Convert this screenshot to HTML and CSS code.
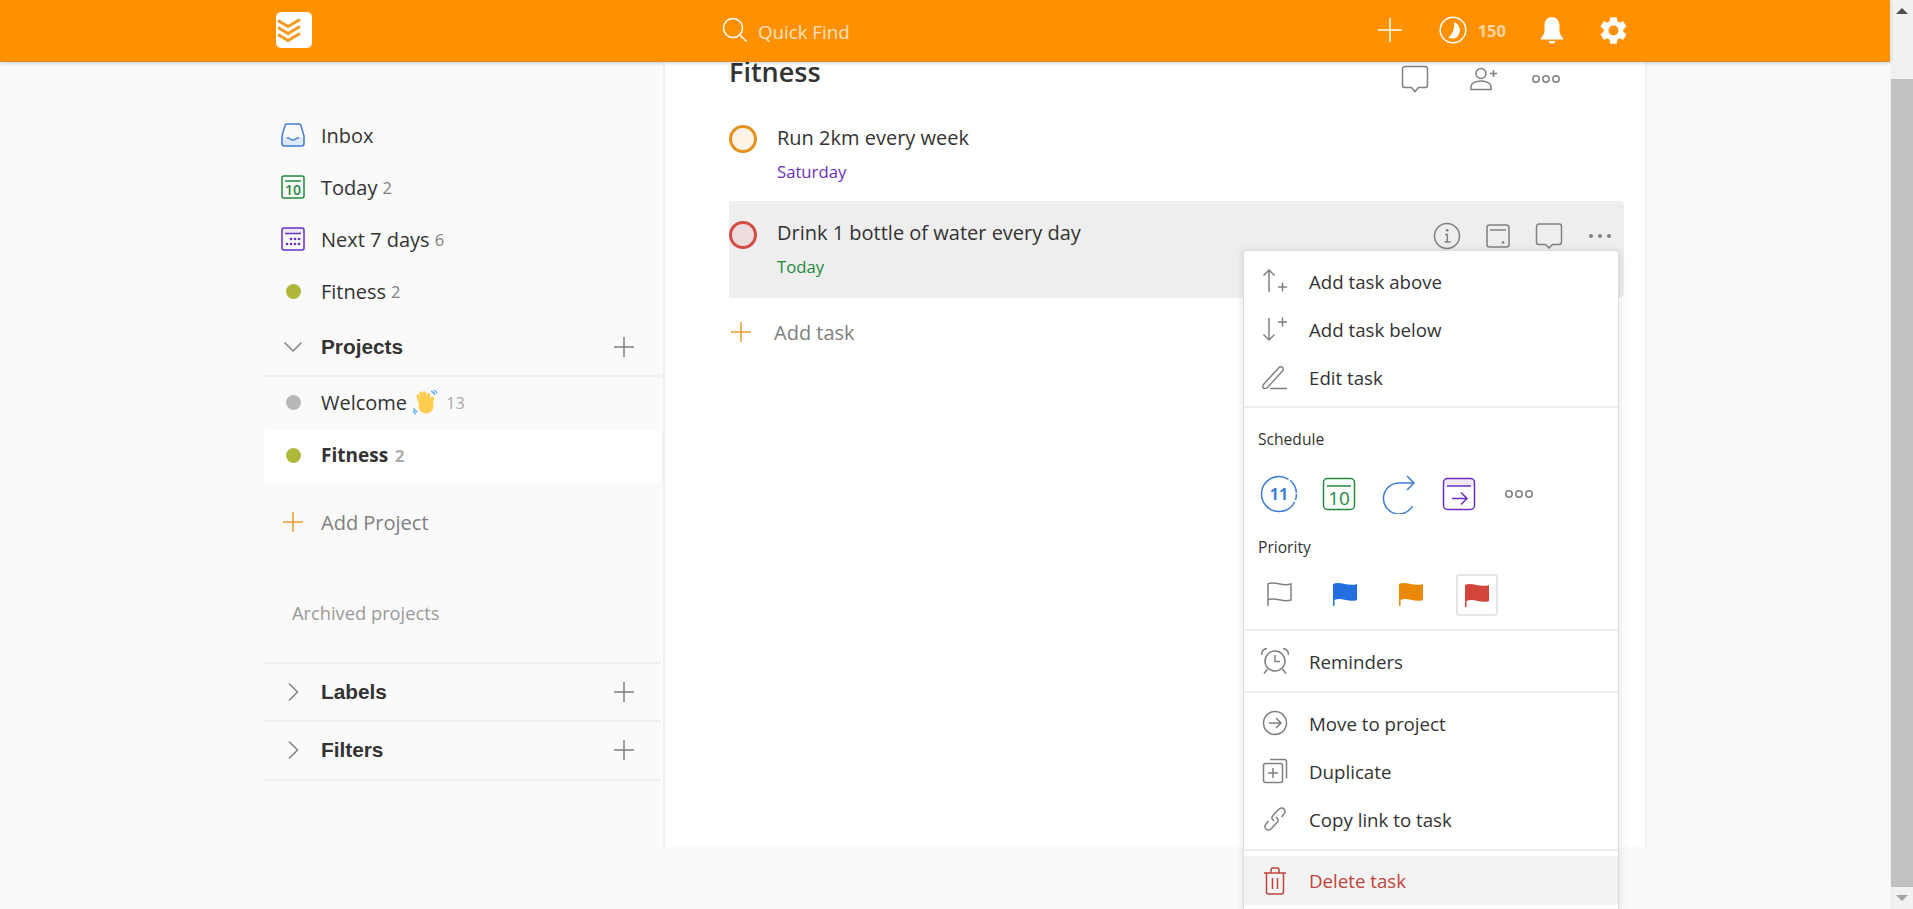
FILE: index.html
```html
<!DOCTYPE html>
<html lang="en">
<head>
  <meta charset="UTF-8">
  <meta name="viewport" content="width=device-width, initial-scale=1.0">
  <title>Fitness: Todoist</title>
  <link rel="stylesheet" href="styles.css">
</head>
<body>
  <div id="page">
    <div id="window">
      <header class="topbar">
        <div class="logo">
          <svg class="ico logo-stripes" width="24" height="26" viewBox="0 0 24 26"><path d="M1 6l10 6 12-7M1 13l10 6 12-7M1 20l10 6 12-7" transform="translate(0 -2.500)"/></svg>
        </div>
        <div class="search">
          <svg class="ico" width="26" height="26" viewBox="0 0 26 26"><circle cx="11" cy="11" r="9.500"/><path d="M18 18l6.500 6.500"/></svg>
          <span class="search-text">Quick Find</span>
        </div>
        <div class="topbar-actions">
          <svg class="ico" width="26" height="26" viewBox="0 0 26 26"><path d="M13 1v24M1 13h24"/></svg>
          <svg class="ico karma" width="28" height="28" viewBox="0 0 28 28"><circle cx="14" cy="14" r="12.800"/><path class="solid" d="M15 6c6 2 8 10 3 15-2.500 2-6 2-9 .5 4-2 7-9 6-15.500z"/></svg>
          <span class="karma-count">150</span>
          <svg class="solid bell" width="26" height="28" viewBox="0 0 26 28"><path d="M13 1c5 0 7.500 4 7.500 9v5c0 3 2 5 3.500 7 .5 1 0 1.500-1 1.500H3c-1 0-1.500-.5-1-1.500 1.500-2 3.500-4 3.500-7v-5C5.500 5 8 1 13 1zM9.500 25h7c-.5 2-2 2.500-3.500 2.500S10 27 9.500 25z"/></svg>
          <svg class="solid gear" width="33" height="33" viewBox="0 0 24 24"><path d="M19.14 12.94c.04-.3.06-.61.06-.94 0-.32-.02-.64-.07-.94l2.03-1.58c.18-.14.23-.41.12-.61l-1.92-3.32c-.12-.22-.37-.29-.59-.22l-2.39.96c-.5-.38-1.03-.7-1.62-.94l-.36-2.54c-.04-.24-.24-.41-.48-.41h-3.84c-.24 0-.43.17-.47.41l-.36 2.54c-.59.24-1.13.57-1.62.94l-2.39-.96c-.22-.08-.47 0-.59.22L2.74 8.87c-.12.21-.08.47.12.61l2.03 1.58c-.05.3-.09.63-.09.94s.02.64.07.94l-2.03 1.58c-.18.14-.23.41-.12.61l1.92 3.32c.12.22.37.29.59.22l2.39-.96c.5.38 1.03.7 1.62.94l.36 2.54c.05.24.24.41.48.41h3.84c.24 0 .44-.17.47-.41l.36-2.54c.59-.24 1.13-.56 1.62-.94l2.39.96c.22.08.47 0 .59-.22l1.92-3.32c.12-.22.07-.47-.12-.61l-2.01-1.58zM12 15.600c-1.980 0-3.600-1.620-3.600-3.600s1.620-3.600 3.600-3.600 3.600 1.620 3.600 3.600-1.620 3.600-3.600 3.600z"/></svg>
        </div>
      </header>

      <div class="content">
        <aside class="sidebar">
          <ul class="nav">
            <li class="nav-row">
              <span class="nav-icon"><svg class="ico blue" width="26" height="26" viewBox="0 0 26 26"><path class="tint-blue" d="M2 15h6c1 0 1.500 2.500 5 2.500s4-2.500 5-2.500h6v6.500a2.500 2.500 0 0 1-2.500 2.500h-17A2.500 2.500 0 0 1 2 21.500z"/><path d="M7 2h12a2 2 0 0 1 2 1.500l3 10.500v7.500a2.500 2.500 0 0 1-2.500 2.500h-17A2.500 2.500 0 0 1 2 21.500V14L5 3.500A2 2 0 0 1 7 2z"/><path d="M7 16h1.500c1 0 1.500 2 4.500 2s3.500-2 4.500-2H19" class="inbox-wave"/></svg></span>
              <span>Inbox</span>
            </li>
            <li class="nav-row">
              <span class="nav-icon"><svg class="ico green" width="26" height="26" viewBox="0 0 26 26"><rect x="2" y="2" width="22" height="22" rx="2"/><path d="M5 7h16"/><text x="13" y="21" class="cal-num">10</text></svg></span>
              <span>Today</span><span class="count">2</span>
            </li>
            <li class="nav-row">
              <span class="nav-icon"><svg class="ico purple" width="26" height="26" viewBox="0 0 26 26"><path class="tint-purple" d="M2 4a2 2 0 0 1 2-2h18a2 2 0 0 1 2 2v3H2z"/><rect x="2" y="2" width="22" height="22" rx="2"/><path d="M5 7.500h16"/><path class="dots" d="M11 13h.1M15 13h.1M19 13h.1M7 18h.1M11 18h.1M15 18h.1M19 18h.1"/></svg></span>
              <span>Next 7 days</span><span class="count">6</span>
            </li>
            <li class="nav-row">
              <span class="nav-icon"><span class="dot dot-olive"></span></span>
              <span>Fitness</span><span class="count">2</span>
            </li>
          </ul>

          <div class="section-head section-projects">
            <span class="nav-icon"><svg class="ico grey" width="20" height="12" viewBox="0 0 20 12"><path d="M1.500 1.500l8.500 8.500 8.500-8.500"/></svg></span>
            <span class="section-name">Projects</span>
            <svg class="ico grey section-add" width="20" height="20" viewBox="0 0 20 20"><path d="M10 0v20M0 10h20"/></svg>
          </div>

          <ul class="nav project-list">
            <li class="nav-row">
              <span class="nav-icon"><span class="dot dot-grey"></span></span>
              <span>Welcome</span>
              <svg class="wave" width="25" height="25" viewBox="0 0 25 25">
                <g class="wave-lines"><path d="M18 1.500c2 .2 3.500 1.500 4 3.500M20.500 0c1.500.5 3 1.500 3.500 3.500M1 18c.2 2 1.500 3.500 3.500 4M0 20.500c.5 1.500 1.500 3 3 3.500"/></g>
                <g class="wave-hand"><path d="M7 12l-2-6M10 11L8 3M13 10l-1.500-7M16 10l-.5-5.500M18.500 14l1-6"/></g>
                <circle class="wave-palm" cx="13" cy="16" r="7.500"/>
              </svg>
              <span class="count light">13</span>
            </li>
            <li class="nav-row active">
              <span class="nav-icon"><span class="dot dot-olive"></span></span>
              <span>Fitness</span><span class="count">2</span>
            </li>
          </ul>

          <div class="nav-row add-row add-project">
            <span class="nav-icon"><svg class="ico orange" width="20" height="20" viewBox="0 0 20 20"><path d="M10 0v20M0 10h20"/></svg></span>
            <span>Add Project</span>
          </div>

          <div class="archived">Archived projects</div>

          <div class="section-head section-labels">
            <span class="nav-icon"><svg class="ico grey" width="12" height="20" viewBox="0 0 12 20"><path d="M2 1.500l8.500 8.500-8.500 8.500"/></svg></span>
            <span class="section-name">Labels</span>
            <svg class="ico grey section-add" width="20" height="20" viewBox="0 0 20 20"><path d="M10 0v20M0 10h20"/></svg>
          </div>
          <div class="section-head">
            <span class="nav-icon"><svg class="ico grey" width="12" height="20" viewBox="0 0 12 20"><path d="M2 1.500l8.500 8.500-8.500 8.500"/></svg></span>
            <span class="section-name">Filters</span>
            <svg class="ico grey section-add" width="20" height="20" viewBox="0 0 20 20"><path d="M10 0v20M0 10h20"/></svg>
          </div>
        </aside>

        <main class="main">
          <div class="main-head">
            <h1>Fitness</h1>
            <div class="main-actions">
              <svg class="ico grey comment-head" width="28" height="28" viewBox="0 0 28 28"><path d="M4 1.500h20a2.500 2.500 0 0 1 2.500 2.500v16a2.500 2.500 0 0 1-2.500 2.500h-6.500L14 26.500l-3.500-4H4A2.500 2.500 0 0 1 1.500 20V4A2.500 2.500 0 0 1 4 1.500z"/></svg>
              <svg class="ico grey" width="28" height="24" viewBox="0 0 28 24"><circle cx="11" cy="6.500" r="5"/><path d="M1 22.500v-3c0-3 4-5.500 10-5.500s10 2.500 10 5.500v3zM20 6.500h7M23.500 3v7"/></svg>
              <svg class="ico grey" width="30" height="10" viewBox="0 0 30 10"><circle cx="5" cy="5" r="3.200"/><circle cx="15" cy="5" r="3.200"/><circle cx="25" cy="5" r="3.200"/></svg>
            </div>
          </div>

          <div class="task">
            <span class="check check-orange"></span>
            <div class="task-body">
              <div class="task-title">Run 2km every week</div>
              <div class="task-date date-purple">Saturday</div>
            </div>
          </div>

          <div class="task task-hover">
            <span class="check check-red"></span>
            <div class="task-body">
              <div class="task-title">Drink 1 bottle of water every day</div>
              <div class="task-date date-green">Today</div>
            </div>
            <div class="task-actions">
              <span><svg class="ico grey" width="28" height="28" viewBox="0 0 28 28"><circle cx="14" cy="14" r="12.500"/><path d="M12 12.500h2.300V20M11.500 20h6"/><path class="dots" d="M14.200 8.200h.1"/></svg></span>
              <span><svg class="ico grey" width="26" height="26" viewBox="0 0 26 26"><rect x="2" y="2" width="22" height="22" rx="2.500"/><path d="M5 7h16"/><path class="dots" d="M18 19.500h.1"/></svg></span>
              <span><svg class="ico grey" width="28" height="28" viewBox="0 0 28 28"><path d="M4 2h20a2.500 2.500 0 0 1 2.500 2.500V20a2.500 2.500 0 0 1-2.500 2.500h-6.500L14 26l-3.500-3.500H4A2.500 2.500 0 0 1 1.500 20V4.500A2.500 2.500 0 0 1 4 2z"/></svg></span>
              <span><svg class="solid-grey" width="24" height="6" viewBox="0 0 24 6"><circle cx="3" cy="3" r="2"/><circle cx="12" cy="3" r="2"/><circle cx="21" cy="3" r="2"/></svg></span>
            </div>
          </div>

          <div class="add-row add-task">
            <svg class="ico orange" width="20" height="20" viewBox="0 0 20 20"><path d="M10 0v20M0 10h20"/></svg>
            <span>Add task</span>
          </div>
        </main>

        <div class="menu">
          <div class="menu-group menu-group-first">
            <div class="menu-item">
              <svg class="ico grey" width="26" height="26" viewBox="0 0 26 26"><path d="M7 24V2M1.500 7.500L7 2l5.500 5.500M16 19h9M20.500 14.500v9"/></svg>
              <span>Add task above</span>
            </div>
            <div class="menu-item">
              <svg class="ico grey" width="26" height="26" viewBox="0 0 26 26"><path d="M7 2v22M1.500 18.500L7 24l5.500-5.500M16 6h9M20.500 1.500v9"/></svg>
              <span>Add task below</span>
            </div>
            <div class="menu-item">
              <svg class="ico grey" width="26" height="26" viewBox="0 0 26 26"><path d="M1.500 20.500L17 3.500c1-1 2.500-1 3.500 0s1 2.500 0 3.500L5.500 23.500c-1 1-4 1.500-4.500.5s0-2.500.5-3.500zM8 24.500h17"/></svg>
              <span>Edit task</span>
            </div>
          </div>

          <div class="menu-group menu-pickers">
            <div class="menu-label">Schedule</div>
            <div class="picker-row">
              <span><svg class="ico blue" width="38" height="38" viewBox="0 0 38 38"><circle cx="19" cy="19" r="17.500" stroke-dasharray="6 2 84 2 14 2"/><text x="19" y="25" class="day-num">11</text></svg></span>
              <span><svg class="ico green" width="34" height="34" viewBox="0 0 34 34"><rect x="1.500" y="1.500" width="31" height="31" rx="4"/><path d="M5 9h24"/><text x="17" y="28" class="cal-num big">10</text></svg></span>
              <span><svg class="ico blue" width="34" height="40" viewBox="0 0 34 40"><path d="M31 9H17a15.500 15.500 0 1 0 13.500 23M25 2l7 7-7 7"/></svg></span>
              <span><svg class="ico purple" width="34" height="34" viewBox="0 0 34 34"><path class="tint-purple" d="M2 5a3 3 0 0 1 3-3h24a3 3 0 0 1 3 3v4H2z"/><rect x="1.500" y="1.500" width="31" height="31" rx="4"/><path d="M5 9h24M10 21.500h15M19 15.500l6 6-6 6"/></svg></span>
              <span><svg class="ico grey" width="30" height="10" viewBox="0 0 30 10"><circle cx="5" cy="5" r="3.200"/><circle cx="15" cy="5" r="3.200"/><circle cx="25" cy="5" r="3.200"/></svg></span>
            </div>
            <div class="menu-label priority-label">Priority</div>
            <div class="picker-row flags">
              <span><svg class="ico grey" width="26" height="26" viewBox="0 0 26 26"><path d="M2 25V3c7-3.500 14 3 23 0v16c-8 3-16-3.500-23 0"/></svg></span>
              <span><svg class="flag flag-blue" width="26" height="26" viewBox="0 0 26 26"><path d="M1 25V3c7-3.500 15 3 24 0v16c-8 3-16-3.500-22.500 0V25z"/></svg></span>
              <span><svg class="flag flag-orange" width="26" height="26" viewBox="0 0 26 26"><path d="M1 25V3c7-3.500 15 3 24 0v16c-8 3-16-3.500-22.500 0V25z"/></svg></span>
              <span class="flag-current"><svg class="flag flag-red" width="26" height="26" viewBox="0 0 26 26"><path d="M1 25V3c7-3.500 15 3 24 0v16c-8 3-16-3.500-22.500 0V25z"/></svg></span>
            </div>
          </div>

          <div class="menu-group">
            <div class="menu-item">
              <svg class="ico grey alarm" width="30" height="28" viewBox="0 0 30 28"><circle cx="15" cy="14" r="10"/><path d="M15 8v6.500h5M2 8c-1-3 1-6 5-6.500M28 8c1-3-1-6-5-6.500M7.500 22L4 26.500M22.500 22l3.500 4.500"/></svg>
              <span>Reminders</span>
            </div>
          </div>

          <div class="menu-group">
            <div class="menu-item">
              <svg class="ico grey" width="26" height="26" viewBox="0 0 26 26"><circle cx="13" cy="13" r="11.500"/><path d="M7 13h12M14 8l5 5-5 5"/></svg>
              <span>Move to project</span>
            </div>
            <div class="menu-item">
              <svg class="ico grey" width="26" height="26" viewBox="0 0 26 26"><rect x="1.500" y="5.500" width="19" height="19" rx="2"/><path d="M6 15h10M11 10v10M8 1.500h14.500a2 2 0 0 1 2 2v17"/></svg>
              <span>Duplicate</span>
            </div>
            <div class="menu-item">
              <svg class="ico grey" width="26" height="26" viewBox="0 0 26 26"><path d="M12 15l-1-1c-1.500-1.500-1.500-3 0-4.500l5.500-6c2-2 4-2 5.500-.5s1.500 3.500-.5 5.500l-2 2.500M14 11l1 1c1.500 1.500 1.500 3 0 4.500l-5.500 6c-2 2-4 2-5.500.5s-1.500-3.500.5-5.500l2-2.500"/></svg>
              <span>Copy link to task</span>
            </div>
          </div>

          <div class="menu-item menu-delete">
            <svg class="ico red" width="26" height="28" viewBox="0 0 26 28"><path d="M2 6h22M9 6V3a2 2 0 0 1 2-2h4a2 2 0 0 1 2 2v3M4.500 6v19a2 2 0 0 0 2 2h13a2 2 0 0 0 2-2V6M10.500 11v11M15.500 11v11"/></svg>
            <span>Delete task</span>
          </div>
        </div>
      </div>
    </div>

    <div class="scrollbar">
      <div class="scroll-btn"><span class="arrow-up"></span></div>
      <div class="scroll-thumb"></div>
      <div class="scroll-btn"><span class="arrow-down"></span></div>
    </div>
  </div>
</body>
</html>
```

FILE: styles.css
```css
* {
  box-sizing: border-box;
}

html, body {
  margin: 0;
  padding: 0;
  height: 909px;
  overflow: hidden;
}

body {
  font-family: 'Open Sans', 'Noto Sans', sans-serif;
  font-size: 20px;
  color: #333;
  background-color: #fafafa;
}

ul {
  list-style: none;
  margin: 0;
  padding: 0;
}

#page {
  display: flex;
  height: 909px;
}

#window {
  flex: 1;
  display: flex;
  flex-direction: column;
  min-width: 0;
}

/* icons */
.ico {
  fill: none;
  stroke: currentColor;
  stroke-width: 1.5;
  flex: none;
  display: block;
}

.ico text {
  stroke: none;
  fill: currentColor;
  text-anchor: middle;
}

.solid {
  fill: #fff;
  stroke: none;
}

.solid-grey {
  fill: #808080;
}

.blue { color: #3f7dd6; }
.green { color: #25883f; }
.purple { color: #692fc2; }
.orange { color: #eb9b2d; }
.grey { color: #808080; }
.red { color: #c0443c; }

.tint-blue { fill: #dde8f8; stroke: none; }
.tint-purple { fill: #efe8f8; stroke: none; }

.inbox-wave {
  stroke-width: 1.300;
}

.dots {
  stroke-width: 2.600;
  stroke-linecap: round;
}

.cal-num {
  font-size: 14px;
  font-weight: 600;
}

.cal-num.big {
  font-size: 19px;
  font-weight: 400;
}

.day-num {
  font-size: 16px;
  font-weight: 700;
}

/* top bar */
.topbar {
  position: relative;
  z-index: 2;
  flex: none;
  height: 62px;
  display: flex;
  align-items: center;
  padding: 0 263px 1px 276px;
  background-color: #ff9000;
  border-bottom: 1px solid #e0892a;
  box-shadow: 0 1px 4px rgba(0, 0, 0, 0.2);
  color: #fff;
}

.logo {
  width: 36px;
  height: 36px;
  display: flex;
  align-items: center;
  padding-left: 1px;
  background-color: #fff;
  border-radius: 5px;
  color: #f29a22;
}

.logo-stripes {
  stroke-width: 3;
}

.search {
  display: flex;
  align-items: center;
  gap: 10px;
  margin-left: 410px;
  font-size: 18.700px;
  color: rgba(255, 255, 255, 0.75);
}

.search .ico {
  color: #fff;
}

.search-text {
  padding-top: 3px;
}

.topbar-actions {
  margin-left: auto;
  display: flex;
  align-items: center;
}

.karma {
  margin-left: 36px;
}

.karma-count {
  margin-left: 11px;
  font-size: 16.500px;
  font-weight: 700;
  color: rgba(255, 255, 255, 0.65);
}

.bell {
  margin-left: 33px;
}

.gear {
  margin-left: 32px;
  margin-right: -3px;
}

/* layout */
.content {
  position: relative;
  flex: 1;
  display: flex;
  align-items: flex-start;
  min-height: 0;
}

.sidebar {
  flex: none;
  width: 400px;
  margin-left: 263px;
  padding-top: 47px;
}

.nav-row {
  height: 52px;
  display: flex;
  align-items: center;
  padding-left: 1px;
  border-radius: 5px;
  margin-right: 2px;
  margin-left: 1px;
}

.project-list {
  margin-top: -1px;
}

.nav-row.active {
  height: 53px;
  background-color: #fff;
  font-size: 19px;
  font-weight: 700;
  margin-top: 2px;
  padding-bottom: 3px;
}

.nav-icon {
  flex: none;
  width: 56px;
  display: flex;
  justify-content: center;
  align-items: center;
}

.count {
  margin-left: 5px;
  font-size: 16.500px;
  color: #808080;
}

.active .count {
  margin-left: 7px;
  color: #aaa;
}

.count.light {
  margin-left: 8px;
  color: #aaa;
}

.dot {
  width: 15px;
  height: 15px;
  border-radius: 50%;
}

.dot-olive { background-color: #afb83b; }
.dot-grey { background-color: #b8b8b8; }

.wave {
  margin-left: 6px;
}

.wave-lines path {
  fill: none;
  stroke: #5dadec;
  stroke-width: 1.300;
}

.wave-hand path {
  fill: none;
  stroke: #ffcc4d;
  stroke-width: 3.200;
  stroke-linecap: round;
}

.wave-palm {
  fill: #ffcc4d;
}

.section-head {
  height: 59.500px;
  display: flex;
  align-items: center;
  padding-left: 1px;
  margin: 0 2px 0 1px;
  border-bottom: 2px solid #f0f0f0;
}

.section-projects {
  height: 60px;
  padding-top: 2px;
}

.section-labels {
  border-top: 2px solid #f0f0f0;
}

.section-name {
  font-family: 'Liberation Sans', Arial, sans-serif;
  font-size: 20.800px;
  font-weight: 700;
}

.section-add {
  margin-left: auto;
  margin-right: 27px;
}

.add-row {
  color: #808080;
}

.add-project {
  margin-top: 13px;
}

.archived {
  margin: 52.500px 0 37.500px 29px;
  height: 24px;
  line-height: 24px;
  font-size: 18.300px;
  color: #999;
}

/* task list */
.main {
  flex: none;
  width: 984px;
  height: 785px;
  padding: 0 21px 0 64px;
  background-color: #fff;
  border-left: 2px solid #f0f0f0;
  border-right: 2px solid #f0f0f0;
}

.main-head {
  height: 42px;
  display: flex;
  align-items: flex-start;
  padding-right: 63.500px;
}

.main-head h1 {
  margin: -7px 0 0;
  font-size: 27px;
  line-height: 34px;
  font-weight: 600;
}

.main-actions {
  margin-left: auto;
  display: flex;
  align-items: center;
  gap: 33px;
  padding-top: 1px;
  height: 32px;
}

.comment-head {
  margin-right: 8px;
}

.task {
  height: 97px;
  display: flex;
  align-items: flex-start;
  padding-top: 21px;
}

.task-hover {
  padding-top: 19px;
  background-color: #eee;
  border-radius: 0 5px 5px 0;
}

.check {
  flex: none;
  width: 28px;
  height: 28px;
  margin: 0 20px 0 0;
  border-radius: 50%;
  border: 3px solid;
}

.check-orange {
  border-color: #e6921e;
  background-color: #fdf3e7;
}

.check-red {
  margin-top: 1px;
  border-color: #cf4f47;
  background-color: #ecdddc;
}

.task-title {
  line-height: 26px;
}

.task-date {
  margin-top: 10px;
  font-size: 16.700px;
  line-height: 22px;
}

.date-purple { color: #692fc2; }
.date-green { color: #25883f; }

.task-actions {
  margin-left: auto;
  margin-right: -1px;
  display: flex;
  height: 32px;
}

.task-actions span {
  width: 51px;
  display: flex;
  justify-content: center;
  align-items: center;
}

.add-task {
  display: flex;
  align-items: center;
  height: 68px;
  gap: 23px;
  padding-left: 2px;
  font-size: 20px;
}

/* task menu */
.menu {
  position: absolute;
  z-index: 3;
  top: 188px;
  left: 1243px;
  width: 376px;
  background-color: #fff;
  border: 1px solid #ddd;
  border-radius: 3px;
  box-shadow: 0 1px 8px rgba(0, 0, 0, 0.12);
  padding-bottom: 12px;
}

.menu-group {
  padding: 6px 0 6px;
  border-bottom: 2px solid #eee;
}

.menu-group-first {
  padding-bottom: 5px;
}

.menu-item {
  height: 48px;
  display: flex;
  align-items: center;
  padding-left: 18px;
  font-size: 18.700px;
}

.menu-item .ico {
  margin-right: 21px;
}

.menu-item .alarm {
  margin: 0 19px 0 -2px;
}

.menu-pickers {
  padding: 20px 0 15px;
}

.menu-label {
  height: 22px;
  line-height: 22px;
  padding-left: 14px;
  font-size: 15.600px;
}

.priority-label {
  margin-top: 22px;
}

.picker-row {
  height: 40px;
  margin-top: 24px;
  padding-left: 5px;
  display: flex;
}

.picker-row > span {
  flex: none;
  width: 60px;
  display: flex;
  justify-content: center;
  align-items: center;
}

.flags {
  margin-top: 16px;
  padding-left: 2px;
}

.flags > span {
  width: 66px;
}

.flag-blue { fill: #246fe0; }
.flag-orange { fill: #eb8909; }
.flag-red { fill: #d1453b; }

.flags > .flag-current {
  width: 42px;
  height: 42px;
  margin-left: 12px;
  border: 2px solid #e5e5e5;
  border-radius: 3px;
}

.menu-delete {
  height: 49px;
  margin-top: 5px;
  background-color: #f3f3f3;
  color: #c0443c;
}

/* fake browser scrollbar */
.scrollbar {
  flex: none;
  width: 23px;
  display: flex;
  flex-direction: column;
  padding-left: 1px;
  background-color: #f1f1f1;
}

.scroll-btn {
  height: 22px;
  display: flex;
  justify-content: center;
  align-items: center;
}

.scroll-thumb {
  flex: none;
  height: 808px;
  margin-top: 57px;
  background-color: #c1c1c1;
}

.arrow-up,
.arrow-down {
  width: 0;
  height: 0;
  border-left: 6px solid transparent;
  border-right: 6px solid transparent;
}

.arrow-up {
  border-bottom: 6px solid #505050;
}

.arrow-down {
  border-top: 6px solid #a3a3a3;
}
```
